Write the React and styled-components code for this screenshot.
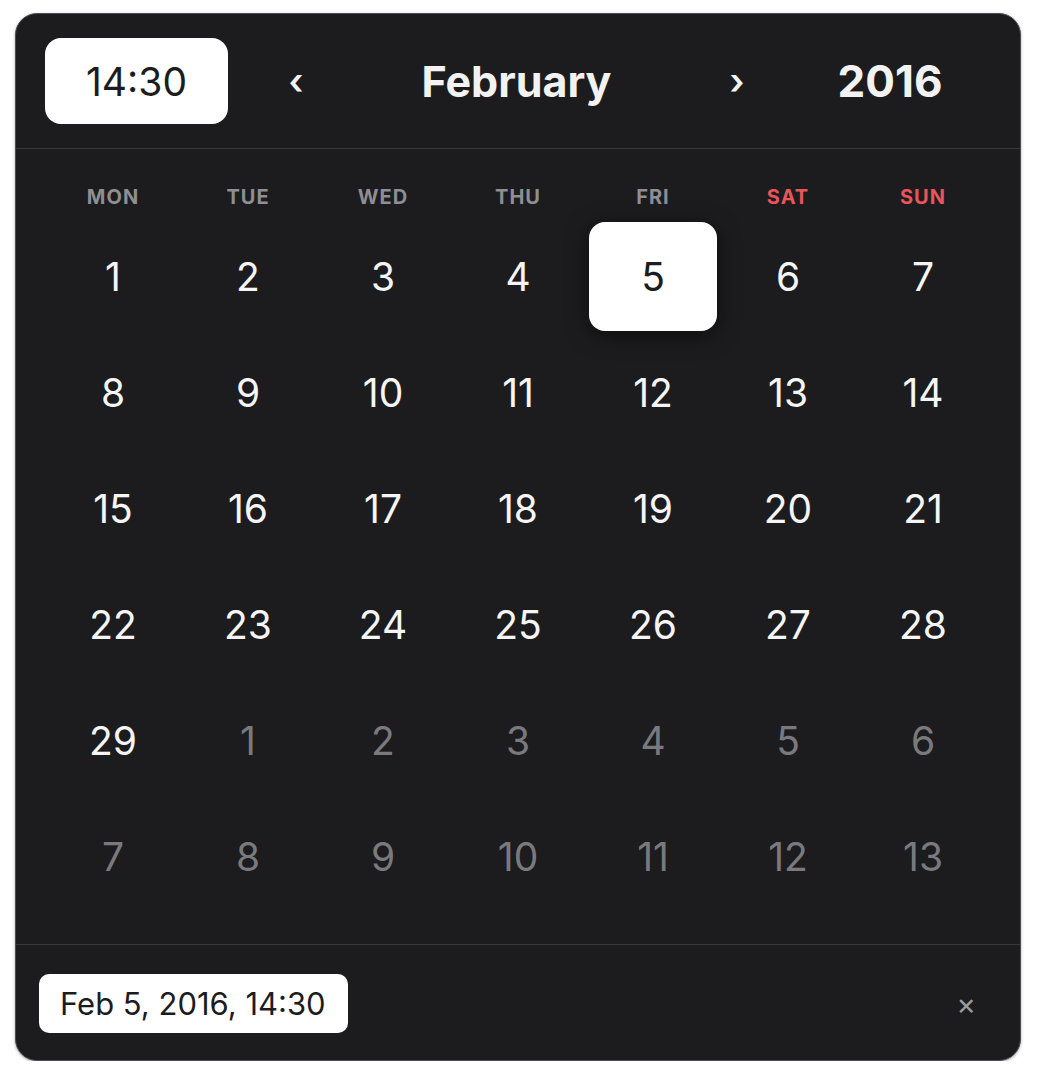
import React from "react";
import styled, { createGlobalStyle } from "styled-components";

const GlobalStyle = createGlobalStyle`
  html, body {
    margin: 0;
    padding: 0;
    background: #ffffff;
  }
  body {
    font-family: Inter, "Noto Sans", "Liberation Sans", sans-serif;
  }
`;

const WEEKDAYS = ["MON", "TUE", "WED", "THU", "FRI", "SAT", "SUN"];

// 2016-02 starts on a Monday; trailing days fill the last two rows
const buildDays = () => {
  const days = [];
  for (let d = 1; d <= 29; d++) days.push({ n: d, current: true });
  let next = 1;
  while (days.length < 42) days.push({ n: next++, current: false });
  return days;
};

const Page = styled.div`
  padding: 13px 0 0 15px;
`;

const Card = styled.div`
  width: 1006px;
  height: 1048px;
  box-sizing: border-box;
  background: #1c1c1e;
  border: 1px solid #4e4e50;
  border-radius: 22px;
  box-shadow: 0 1px 3px rgba(0, 0, 0, 0.35);
  display: flex;
  flex-direction: column;
  overflow: hidden;
`;

const Header = styled.div`
  display: flex;
  align-items: center;
  padding: 24px 29px 24px 29px;
  border-bottom: 1px solid #38383a;
`;

const TimePill = styled.div`
  width: 183px;
  height: 86px;
  border-radius: 16px;
  background: #ffffff;
  color: #1c1c1e;
  font-size: 39px;
  display: flex;
  align-items: center;
  justify-content: center;
  margin-right: 38px;
`;

const NavButton = styled.button`
  width: 60px;
  height: 60px;
  border: none;
  background: transparent;
  color: #f2f2f2;
  font-family: inherit;
  font-size: 36px;
  font-weight: 600;
  padding: 0;
  cursor: pointer;
  display: flex;
  align-items: center;
  justify-content: center;
`;

const MonthLabel = styled.div`
  width: 381px;
  text-align: center;
  color: #f2f2f2;
  font-size: 43px;
  font-weight: 700;
`;

const YearLabel = styled.div`
  flex: 1;
  text-align: center;
  padding-left: 22px;
  color: #f2f2f2;
  font-size: 44px;
  font-weight: 700;
`;

const Body = styled.div`
  flex: 1;
  padding: 33px 33px 0 33px;
`;

const WeekRow = styled.div`
  display: grid;
  grid-template-columns: repeat(7, 1fr);
  column-gap: 7px;
  height: 30px;
  margin-bottom: 10px;
`;

const WeekDay = styled.div`
  display: flex;
  align-items: center;
  justify-content: center;
  font-size: 20px;
  font-weight: 700;
  letter-spacing: 1px;
  color: ${(p) => (p.$weekend ? "#e8555b" : "#8e8e93")};
`;

const DayGrid = styled.div`
  display: grid;
  grid-template-columns: repeat(7, 1fr);
  grid-auto-rows: 109px;
  gap: 7px;
`;

const DayCell = styled.div`
  display: flex;
  align-items: center;
  justify-content: center;
  font-size: 39px;
  border-radius: 16px;
  color: ${(p) => (p.$selected ? "#1c1c1e" : p.$current ? "#f5f5f5" : "#7a7a7e")};
  background: ${(p) => (p.$selected ? "#ffffff" : "transparent")};
  box-shadow: ${(p) => (p.$selected ? "0 4px 22px rgba(0, 0, 0, 0.55)" : "none")};
`;

const Footer = styled.div`
  display: flex;
  align-items: center;
  justify-content: space-between;
  height: 116px;
  box-sizing: border-box;
  padding: 0 44px 0 23px;
  border-top: 1px solid #38383a;
`;

const ValuePill = styled.div`
  height: 59px;
  padding: 0 22px 0 21px;
  border-radius: 10px;
  background: #ffffff;
  color: #1c1c1e;
  font-size: 31px;
  display: flex;
  align-items: center;
  margin-top: 2px;
`;

const ClearButton = styled.button`
  border: none;
  background: transparent;
  color: #9a9a9e;
  font-family: inherit;
  font-size: 30px;
  padding: 0;
  cursor: pointer;
  margin-top: 2px;
`;

export default function App() {
  const days = buildDays();
  return (
    <>
      <GlobalStyle />
      <Page>
        <Card>
          <Header>
            <TimePill>14:30</TimePill>
            <NavButton aria-label="Previous month">‹</NavButton>
            <MonthLabel>February</MonthLabel>
            <NavButton aria-label="Next month">›</NavButton>
            <YearLabel>2016</YearLabel>
          </Header>
          <Body>
            <WeekRow>
              {WEEKDAYS.map((w, i) => (
                <WeekDay key={w} $weekend={i >= 5}>
                  {w}
                </WeekDay>
              ))}
            </WeekRow>
            <DayGrid>
              {days.map((d, i) => (
                <DayCell key={i} $current={d.current} $selected={d.current && d.n === 5}>
                  {d.n}
                </DayCell>
              ))}
            </DayGrid>
          </Body>
          <Footer>
            <ValuePill>Feb 5, 2016, 14:30</ValuePill>
            <ClearButton aria-label="Clear">×</ClearButton>
          </Footer>
        </Card>
      </Page>
    </>
  );
}
